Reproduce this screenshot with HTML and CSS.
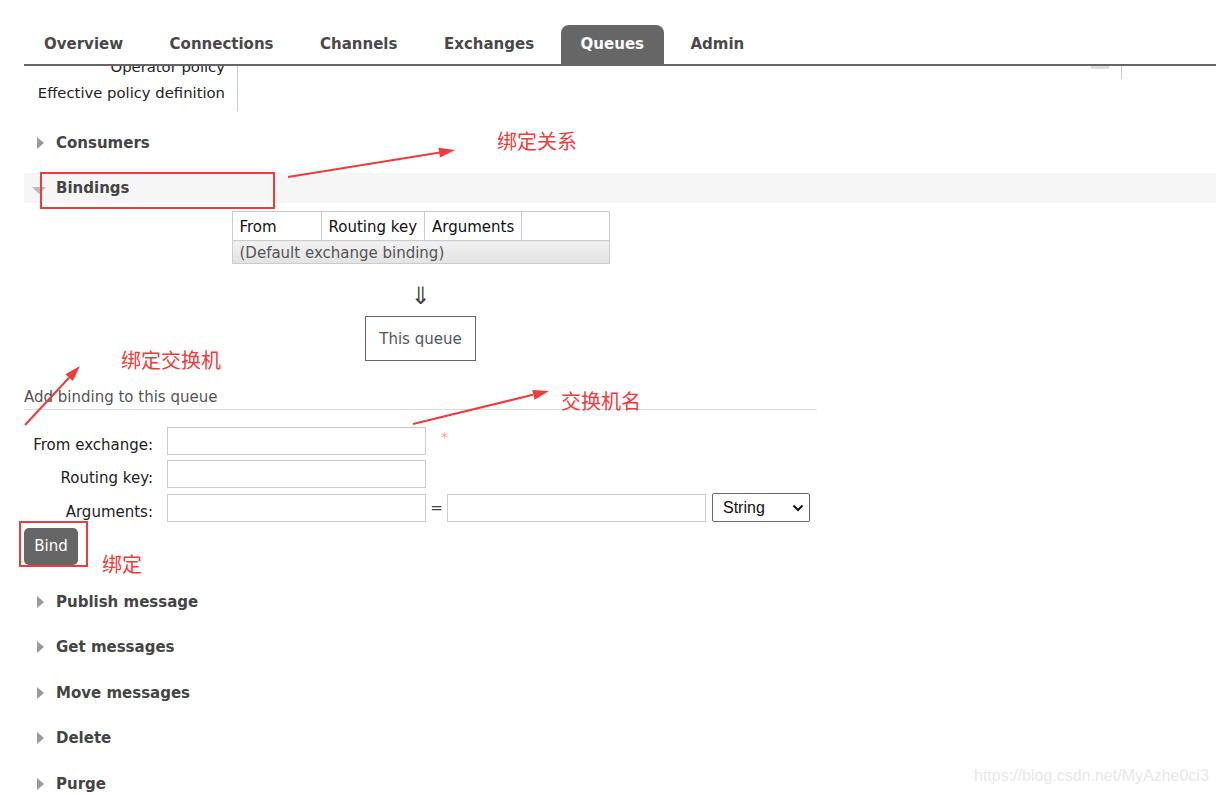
FILE: index.html
```html
<!DOCTYPE html>
<html lang="en">
<head>
<meta charset="utf-8">
<title>Queue</title>
<link rel="stylesheet" href="styles.css">
</head>
<body>
<div class="page">
  <div class="header">
    <ul class="tabs">
      <li class="tab">Overview</li>
      <li class="tab">Connections</li>
      <li class="tab">Channels</li>
      <li class="tab">Exchanges</li>
      <li class="tab active">Queues</li>
      <li class="tab">Admin</li>
    </ul>
  </div>

  <div class="props">
    <div class="props-col">
      <div class="props-inner">
        <div class="prop">Operator policy</div>
        <div class="prop">Effective policy definition</div>
      </div>
    </div>
    <div class="props-right">
      <span class="grey-bar"></span>
      <span class="vline"></span>
    </div>
  </div>

  <div class="section first"><span class="tri-box"><span class="tri right"></span></span>Consumers</div>
  <div class="section open"><span class="tri-box"><span class="tri down"></span></span>Bindings</div>

  <div class="bindings">
    <table class="btable">
      <tr class="bhead">
        <th class="c1">From</th>
        <th class="c2">Routing key</th>
        <th class="c3">Arguments</th>
        <th class="c4"></th>
      </tr>
      <tr class="brow">
        <td colspan="4">(Default exchange binding)</td>
      </tr>
    </table>
    <div class="darr">&#8659;</div>
    <div class="thisq">This queue</div>
  </div>

  <div class="subhead">Add binding to this queue</div>

  <div class="form">
    <div class="frow">
      <label class="flabel">From exchange:</label>
      <input class="finput" type="text">
      <span class="req">*</span>
    </div>
    <div class="frow">
      <label class="flabel">Routing key:</label>
      <input class="finput" type="text">
    </div>
    <div class="frow">
      <label class="flabel">Arguments:</label>
      <input class="finput" type="text">
      <span class="eq">=</span>
      <input class="finput" type="text">
      <span class="selwrap">
        <select class="fselect"><option>String</option></select>
        <svg class="chev" width="12" height="8" viewBox="0 0 12 8"><path d="M1.5 1.5 L6 6 L10.5 1.5" fill="none" stroke="#111" stroke-width="2"/></svg>
      </span>
    </div>
  </div>

  <button class="bind">Bind</button>

  <div class="section after-bind"><span class="tri-box"><span class="tri right"></span></span>Publish message</div>
  <div class="section gap"><span class="tri-box"><span class="tri right"></span></span>Get messages</div>
  <div class="section gap"><span class="tri-box"><span class="tri right"></span></span>Move messages</div>
  <div class="section gap"><span class="tri-box"><span class="tri right"></span></span>Delete</div>
  <div class="section gap"><span class="tri-box"><span class="tri right"></span></span>Purge</div>
</div>

<svg class="arrows" width="1216" height="795" viewBox="0 0 1216 795">
  <g fill="#f23a3a" stroke="#f23a3a">
    <line x1="288" y1="177" x2="440" y2="152.6" stroke-width="2"/>
    <polygon points="455,150 440.0,157.5 438.4,147.7" stroke="none"/>
    <line x1="25" y1="425" x2="69" y2="377.7" stroke-width="2"/>
    <polygon points="80,366 72.8,381.1 65.4,374.3" stroke="none"/>
    <line x1="413" y1="424" x2="533" y2="394.8" stroke-width="2"/>
    <polygon points="549,391 534.6,399.7 532.2,389.9" stroke="none"/>
  </g>
</svg>
<div class="rbox rbox-bindings"></div>
<div class="rbox rbox-bind"></div>
<span class="note note1">绑定关系</span>
<span class="note note2">绑定交换机</span>
<span class="note note3">交换机名</span>
<span class="note note4">绑定</span>
<span class="watermark">https://blog.csdn.net/MyAzhe0ci3</span>
</body>
</html>
```

FILE: styles.css
```css
* { box-sizing: border-box; }
html, body { margin: 0; padding: 0; }
body {
  width: 1216px;
  height: 795px;
  overflow: hidden;
  background: #fff;
  font-family: "DejaVu Sans", Verdana, sans-serif;
  font-size: 15px;
  color: #222;
  position: relative;
}
.page { padding-left: 24px; }

/* header tabs */
.header {
  height: 66px;
  display: flex;
  align-items: flex-end;
  border-bottom: 2px solid #666;
}
.tabs {
  list-style: none;
  margin: 0;
  padding: 0;
  display: flex;
  gap: 6.5px;
}
.tab {
  height: 39px;
  line-height: 39px;
  padding: 0 20px;
  font-size: 15px;
  font-weight: bold;
  color: #484848;
  border-radius: 8px 8px 0 0;
}
.tab.active { background: #666; color: #fff; }

/* properties block */
.props {
  display: flex;
  height: 45px;
}
.props-col {
  width: 214px;
  border-right: 1px solid #ccc;
  overflow: hidden;
}
.props-inner { margin-top: -12px; }
.prop {
  height: 26px;
  line-height: 26px;
  text-align: right;
  padding-right: 12px;
  font-size: 14.8px;
  color: #222;
  white-space: nowrap;
}
.props-right {
  margin-left: auto;
  margin-right: 94px;
  display: flex;
  align-items: flex-start;
  gap: 12px;
}
.grey-bar { width: 18px; height: 3px; background: #ddd; }
.vline { width: 1px; height: 13px; background: #ccc; }

/* section headers */
.section {
  display: flex;
  align-items: center;
  height: 30px;
  font-weight: bold;
  color: #444;
}
.section.first { margin-top: 17px; }
.section.open { margin-top: 15px; background: #f6f6f6; }
.section.after-bind { margin-top: 22px; }
.section.gap { margin-top: 15.5px; }
.tri-box { width: 32px; flex: none; display: flex; align-items: center; }
.tri { display: block; width: 0; height: 0; }
.tri.right {
  margin-left: 13px;
  border-left: 7px solid #9a9a9a;
  border-top: 6px solid transparent;
  border-bottom: 6px solid transparent;
}
.tri.down {
  margin-left: 8px;
  margin-top: 4px;
  border-top: 7px solid #bbb;
  border-left: 7px solid transparent;
  border-right: 7px solid transparent;
}

/* bindings */
.bindings {
  width: 793px;
  display: flex;
  flex-direction: column;
  align-items: center;
  padding-top: 8px;
}
.btable {
  border-collapse: collapse;
  width: 378px;
}
.btable th, .btable td {
  border: 1px solid #ccc;
  text-align: left;
  font-weight: normal;
  padding: 1px 7px 0;
  white-space: nowrap;
}
.bhead th { height: 29px; color: #111; }
.c1 { width: 89px; }
.c2 { width: 103px; }
.c3 { width: 97px; }
.brow td {
  height: 23px;
  color: #555;
  background: linear-gradient(#f2f2f2, #e2e2e2);
}
.darr {
  margin-top: 18px;
  height: 28px;
  line-height: 28px;
  font-size: 24px;
  color: #444;
}
.thisq {
  margin-top: 6px;
  height: 45px;
  line-height: 45px;
  padding: 0 13px;
  border: 1px solid #666;
  color: #555;
}

.subhead {
  width: 793px;
  margin-top: 24px;
  height: 25px;
  line-height: 24px;
  color: #555;
  border-bottom: 1px solid #ddd;
}

/* form */
.form { margin-top: 14px; }
.frow {
  display: flex;
  align-items: center;
  height: 33.5px;
}
.flabel {
  width: 129px;
  text-align: right;
  color: #222;
  margin-right: 14px;
  padding-top: 8px;
}
.finput {
  width: 259px;
  height: 28px;
  border: 1px solid #ccc;
  margin: 0;
  padding: 0 4px;
  font: inherit;
}
.req {
  margin-left: 15px;
  margin-top: -8px;
  color: #f99;
  font-size: 14px;
}
.eq { width: 21px; text-align: center; color: #444; }
.selwrap {
  position: relative;
  margin-left: 6px;
  display: inline-block;
}
.fselect {
  appearance: none;
  -webkit-appearance: none;
  width: 98px;
  height: 29px;
  border: 1px solid #6a6a6a;
  border-radius: 2px;
  background: #fff;
  padding: 0 0 0 10px;
  font-family: "Liberation Sans", Arial, sans-serif;
  font-size: 16px;
  color: #111;
}
.chev { position: absolute; right: 6px; top: 11px; pointer-events: none; }

.bind {
  display: block;
  margin-top: 3px;
  width: 54px;
  height: 37px;
  background: #666;
  color: #fff;
  border: none;
  border-radius: 5px;
  font: inherit;
  padding: 0;
}

/* annotations overlay */
.arrows { position: absolute; left: 0; top: 0; pointer-events: none; }
.rbox { position: absolute; border: 2px solid #f23a3a; }
.rbox-bindings { left: 40px; top: 172px; width: 235px; height: 37px; }
.rbox-bind { left: 19px; top: 521px; width: 69px; height: 46px; }
.note {
  position: absolute;
  color: #f23a3a;
  font-family: "Noto Sans CJK SC", sans-serif;
  font-size: 20px;
  line-height: 24px;
  white-space: nowrap;
}
.note1 { left: 497px; top: 129px; }
.note2 { left: 121px; top: 348px; }
.note3 { left: 561px; top: 389px; }
.note4 { left: 102px; top: 552px; }
.watermark {
  position: absolute;
  left: 974px;
  top: 766px;
  font-family: "Liberation Sans", Arial, sans-serif;
  font-size: 16px;
  line-height: 20px;
  color: #e8e8e8;
  white-space: nowrap;
}
```
